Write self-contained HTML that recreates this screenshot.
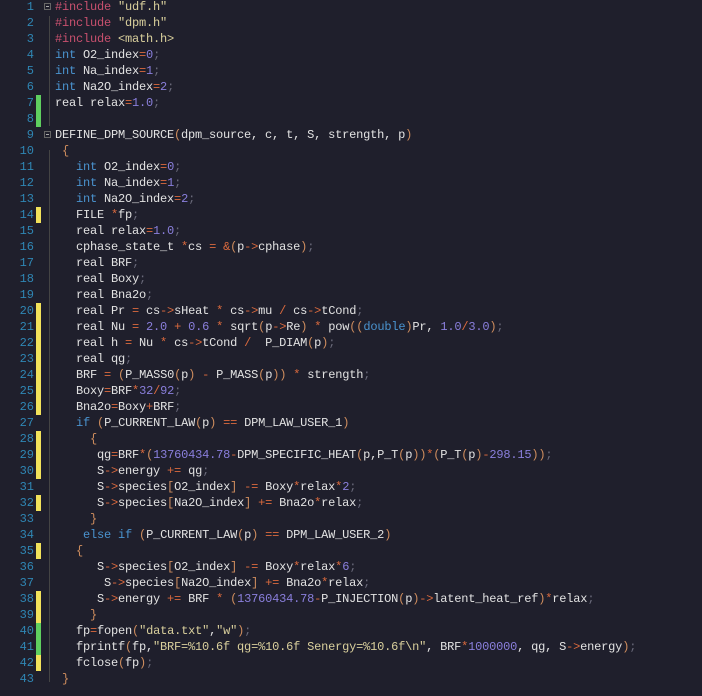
<!DOCTYPE html>
<html><head><meta charset="utf-8"><style>
html,body{margin:0;padding:0;background:#1f1f2c;width:702px;height:696px;overflow:hidden}
#ed{position:absolute;top:-1px;left:0;font-family:"Liberation Mono","DejaVu Sans Mono",monospace;font-size:12px;letter-spacing:-0.2px;color:#e2e2e2}
.l{height:16px;line-height:16px;white-space:pre;position:relative}
.n{position:absolute;left:0;width:34px;text-align:right;color:#2f86b4;letter-spacing:0}
.c{position:absolute;left:55px}
.m{position:absolute;left:36px;width:5px;height:16px}
.y{background:#f2e25a}.g{background:#5fcf5f}
.f{position:absolute;left:44px;top:4px;width:7px;height:7px;border:1px solid #666;box-sizing:border-box;font-size:0}
.f:after{content:"";position:absolute;left:1px;top:2px;width:3px;height:1px;background:#aaa}
#guide{position:absolute;left:49px;top:16px;width:1px;height:110px;background:#444}
#guide2{position:absolute;left:49px;top:150px;width:1px;height:532px;background:#444}
.k{color:#4a93cf}.p{color:#c8506e}.s{color:#d9cf9c}.u{color:#8a7fdc}.o{color:#db6a3e}.d{color:#6a6a7a}.b{color:#cf8d5e}
</style></head><body>
<div id="guide"></div><div id="guide2"></div>
<div id="ed">
<div class="l"><span class="n">1</span><span class="f"></span><span class="c"><span class="p">#include</span> <span class="s">"udf.h"</span></span></div>
<div class="l"><span class="n">2</span><span class="c"><span class="p">#include</span> <span class="s">"dpm.h"</span></span></div>
<div class="l"><span class="n">3</span><span class="c"><span class="p">#include</span> <span class="s">&lt;math.h&gt;</span></span></div>
<div class="l"><span class="n">4</span><span class="c"><span class="k">int</span> O2_index<span class="o">=</span><span class="u">0</span><span class="d">;</span></span></div>
<div class="l"><span class="n">5</span><span class="c"><span class="k">int</span> Na_index<span class="o">=</span><span class="u">1</span><span class="d">;</span></span></div>
<div class="l"><span class="n">6</span><span class="c"><span class="k">int</span> Na2O_index<span class="o">=</span><span class="u">2</span><span class="d">;</span></span></div>
<div class="l"><span class="n">7</span><span class="m g"></span><span class="c">real relax<span class="o">=</span><span class="u">1.0</span><span class="d">;</span></span></div>
<div class="l"><span class="n">8</span><span class="m g"></span><span class="c"></span></div>
<div class="l"><span class="n">9</span><span class="f"></span><span class="c">DEFINE_DPM_SOURCE<span class="b">(</span>dpm_source, c, t, S, strength, p<span class="b">)</span></span></div>
<div class="l"><span class="n">10</span><span class="c"> <span class="b">{</span></span></div>
<div class="l"><span class="n">11</span><span class="c">   <span class="k">int</span> O2_index<span class="o">=</span><span class="u">0</span><span class="d">;</span></span></div>
<div class="l"><span class="n">12</span><span class="c">   <span class="k">int</span> Na_index<span class="o">=</span><span class="u">1</span><span class="d">;</span></span></div>
<div class="l"><span class="n">13</span><span class="c">   <span class="k">int</span> Na2O_index<span class="o">=</span><span class="u">2</span><span class="d">;</span></span></div>
<div class="l"><span class="n">14</span><span class="m y"></span><span class="c">   FILE <span class="o">*</span>fp<span class="d">;</span></span></div>
<div class="l"><span class="n">15</span><span class="c">   real relax<span class="o">=</span><span class="u">1.0</span><span class="d">;</span></span></div>
<div class="l"><span class="n">16</span><span class="c">   cphase_state_t <span class="o">*</span>cs <span class="o">=</span> <span class="o">&amp;</span><span class="b">(</span>p<span class="o">-&gt;</span>cphase<span class="b">)</span><span class="d">;</span></span></div>
<div class="l"><span class="n">17</span><span class="c">   real BRF<span class="d">;</span></span></div>
<div class="l"><span class="n">18</span><span class="c">   real Boxy<span class="d">;</span></span></div>
<div class="l"><span class="n">19</span><span class="c">   real Bna2o<span class="d">;</span></span></div>
<div class="l"><span class="n">20</span><span class="m y"></span><span class="c">   real Pr <span class="o">=</span> cs<span class="o">-&gt;</span>sHeat <span class="o">*</span> cs<span class="o">-&gt;</span>mu <span class="o">/</span> cs<span class="o">-&gt;</span>tCond<span class="d">;</span></span></div>
<div class="l"><span class="n">21</span><span class="m y"></span><span class="c">   real Nu <span class="o">=</span> <span class="u">2.0</span> <span class="o">+</span> <span class="u">0.6</span> <span class="o">*</span> sqrt<span class="b">(</span>p<span class="o">-&gt;</span>Re<span class="b">)</span> <span class="o">*</span> pow<span class="b">((</span><span class="k">double</span><span class="b">)</span>Pr, <span class="u">1.0</span><span class="o">/</span><span class="u">3.0</span><span class="b">)</span><span class="d">;</span></span></div>
<div class="l"><span class="n">22</span><span class="m y"></span><span class="c">   real h <span class="o">=</span> Nu <span class="o">*</span> cs<span class="o">-&gt;</span>tCond <span class="o">/</span>  P_DIAM<span class="b">(</span>p<span class="b">)</span><span class="d">;</span></span></div>
<div class="l"><span class="n">23</span><span class="m y"></span><span class="c">   real qg<span class="d">;</span></span></div>
<div class="l"><span class="n">24</span><span class="m y"></span><span class="c">   BRF <span class="o">=</span> <span class="b">(</span>P_MASS0<span class="b">(</span>p<span class="b">)</span> <span class="o">-</span> P_MASS<span class="b">(</span>p<span class="b">))</span> <span class="o">*</span> strength<span class="d">;</span></span></div>
<div class="l"><span class="n">25</span><span class="m y"></span><span class="c">   Boxy<span class="o">=</span>BRF<span class="o">*</span><span class="u">32</span><span class="o">/</span><span class="u">92</span><span class="d">;</span></span></div>
<div class="l"><span class="n">26</span><span class="m y"></span><span class="c">   Bna2o<span class="o">=</span>Boxy<span class="o">+</span>BRF<span class="d">;</span></span></div>
<div class="l"><span class="n">27</span><span class="c">   <span class="k">if</span> <span class="b">(</span>P_CURRENT_LAW<span class="b">(</span>p<span class="b">)</span> <span class="o">==</span> DPM_LAW_USER_1<span class="b">)</span></span></div>
<div class="l"><span class="n">28</span><span class="m y"></span><span class="c">     <span class="b">{</span></span></div>
<div class="l"><span class="n">29</span><span class="m y"></span><span class="c">      qg<span class="o">=</span>BRF<span class="o">*</span><span class="b">(</span><span class="u">13760434.78</span><span class="o">-</span>DPM_SPECIFIC_HEAT<span class="b">(</span>p,P_T<span class="b">(</span>p<span class="b">))</span><span class="o">*</span><span class="b">(</span>P_T<span class="b">(</span>p<span class="b">)</span><span class="o">-</span><span class="u">298.15</span><span class="b">))</span><span class="d">;</span></span></div>
<div class="l"><span class="n">30</span><span class="m y"></span><span class="c">      S<span class="o">-&gt;</span>energy <span class="o">+=</span> qg<span class="d">;</span></span></div>
<div class="l"><span class="n">31</span><span class="c">      S<span class="o">-&gt;</span>species<span class="b">[</span>O2_index<span class="b">]</span> <span class="o">-=</span> Boxy<span class="o">*</span>relax<span class="o">*</span><span class="u">2</span><span class="d">;</span></span></div>
<div class="l"><span class="n">32</span><span class="m y"></span><span class="c">      S<span class="o">-&gt;</span>species<span class="b">[</span>Na2O_index<span class="b">]</span> <span class="o">+=</span> Bna2o<span class="o">*</span>relax<span class="d">;</span></span></div>
<div class="l"><span class="n">33</span><span class="c">     <span class="b">}</span></span></div>
<div class="l"><span class="n">34</span><span class="c">    <span class="k">else if</span> <span class="b">(</span>P_CURRENT_LAW<span class="b">(</span>p<span class="b">)</span> <span class="o">==</span> DPM_LAW_USER_2<span class="b">)</span></span></div>
<div class="l"><span class="n">35</span><span class="m y"></span><span class="c">   <span class="b">{</span></span></div>
<div class="l"><span class="n">36</span><span class="c">      S<span class="o">-&gt;</span>species<span class="b">[</span>O2_index<span class="b">]</span> <span class="o">-=</span> Boxy<span class="o">*</span>relax<span class="o">*</span><span class="u">6</span><span class="d">;</span></span></div>
<div class="l"><span class="n">37</span><span class="c">       S<span class="o">-&gt;</span>species<span class="b">[</span>Na2O_index<span class="b">]</span> <span class="o">+=</span> Bna2o<span class="o">*</span>relax<span class="d">;</span></span></div>
<div class="l"><span class="n">38</span><span class="m y"></span><span class="c">      S<span class="o">-&gt;</span>energy <span class="o">+=</span> BRF <span class="o">*</span> <span class="b">(</span><span class="u">13760434.78</span><span class="o">-</span>P_INJECTION<span class="b">(</span>p<span class="b">)</span><span class="o">-&gt;</span>latent_heat_ref<span class="b">)</span><span class="o">*</span>relax<span class="d">;</span></span></div>
<div class="l"><span class="n">39</span><span class="m y"></span><span class="c">     <span class="b">}</span></span></div>
<div class="l"><span class="n">40</span><span class="m g"></span><span class="c">   fp<span class="o">=</span>fopen<span class="b">(</span><span class="s">"data.txt"</span>,<span class="s">"w"</span><span class="b">)</span><span class="d">;</span></span></div>
<div class="l"><span class="n">41</span><span class="m g"></span><span class="c">   fprintf<span class="b">(</span>fp,<span class="s">"BRF=%10.6f qg=%10.6f Senergy=%10.6f\n"</span>, BRF<span class="o">*</span><span class="u">1000000</span>, qg, S<span class="o">-&gt;</span>energy<span class="b">)</span><span class="d">;</span></span></div>
<div class="l"><span class="n">42</span><span class="m y"></span><span class="c">   fclose<span class="b">(</span>fp<span class="b">)</span><span class="d">;</span></span></div>
<div class="l"><span class="n">43</span><span class="c"> <span class="b">}</span></span></div>
</div>
</body></html>
